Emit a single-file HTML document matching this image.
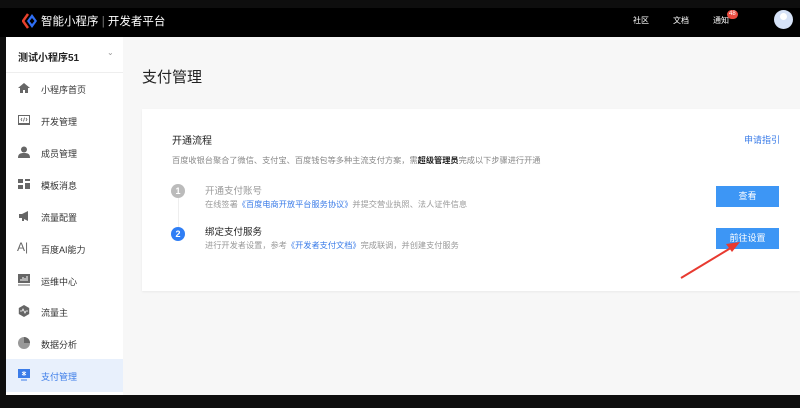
<!DOCTYPE html>
<html><head><meta charset="utf-8"><style>
*{margin:0;padding:0;box-sizing:border-box}
body{width:800px;height:408px;overflow:hidden;background:#0e0e0e;font-family:"Liberation Sans","Noto Sans CJK SC",sans-serif;position:relative}
.a{position:absolute;white-space:nowrap}
.nav{left:0;top:8px;width:800px;height:29px;background:#000}
.main{left:6px;top:37px;width:794px;height:358px;background:#f7f7f7}
.side{left:6px;top:37px;width:117px;height:358px;background:#fff}
.it{font-size:9px;color:#333;left:41px}
.ic{left:18px;width:12px;height:12px}
.card{left:142px;top:109px;width:658px;height:182px;background:#fff;box-shadow:0 1px 2px rgba(0,0,0,.06)}
.btn{left:716px;width:63px;height:21px;background:#3d96f5;color:#fff;font-size:9px;text-align:center;line-height:21px}
.cir{width:14px;height:14px;border-radius:50%;color:#fff;font-size:9px;font-weight:bold;text-align:center;line-height:14px}
</style></head><body>
<div class="a nav"></div>
<svg class="a" style="left:22px;top:13px" width="16" height="16" viewBox="0 0 16 16"><path d="M6 1L1 8l5 7" stroke="#e8412c" stroke-width="2.5" fill="none"/><path d="M10 1l5 7-5 7-5-7z" fill="#2f6ff5"/><path d="M10 5l2.5 3-2.5 3-2.5-3z" fill="#000"/></svg>
<div class="a" style="left:41px;top:13px;color:#fff;font-size:11.5px">智能小程序 <span style="color:#777">|</span> 开发者平台</div>
<div class="a" style="left:633px;top:15px;color:#fff;font-size:8px">社区</div>
<div class="a" style="left:673px;top:15px;color:#fff;font-size:8px">文档</div>
<div class="a" style="left:713px;top:15px;color:#fff;font-size:8px">通知</div>
<div class="a" style="left:727px;top:10px;background:#e84a3f;color:#fff;font-size:6px;border-radius:5px;padding:0 2px;line-height:9px">48</div>
<div class="a" style="left:774px;top:10px;width:19px;height:19px;border-radius:50%;background:#d6e2f7"></div>
<div class="a" style="left:780px;top:13px;width:7px;height:7px;border-radius:50%;background:#fff"></div>
<div class="a main"></div>
<div class="a side"></div>
<div class="a" style="left:18px;top:49px;font-size:10px;color:#222;font-weight:bold">测试小程序51</div>
<div class="a" style="left:107px;top:48px;font-size:8px;color:#999">⌄</div>
<div class="a" style="left:6px;top:72px;width:117px;height:1px;background:#eee"></div>
<div class="a" style="left:6px;top:359px;width:117px;height:33px;background:#e8f0fc"></div>
<div class="a it" style="top:83px">小程序首页</div>
<div class="a it" style="top:115px">开发管理</div>
<div class="a it" style="top:147px">成员管理</div>
<div class="a it" style="top:179px">模板消息</div>
<div class="a it" style="top:211px">流量配置</div>
<div class="a it" style="top:243px">百度AI能力</div>
<div class="a it" style="top:275px">运维中心</div>
<div class="a it" style="top:306px">流量主</div>
<div class="a it" style="top:338px">数据分析</div>
<div class="a it" style="top:370px;color:#3b7ce8">支付管理</div>
<svg class="a ic" style="top:82px" viewBox="0 0 12 12"><path d="M6 1L0 6h2v5h3V8h2v3h3V6h2z" fill="#666"/></svg>
<svg class="a ic" style="top:114px" viewBox="0 0 12 12"><rect x=".5" y="1.5" width="11" height="8" fill="none" stroke="#666"/><path d="M4 4L3 5.5 4 7M8 4l1 1.5L8 7M6.5 3.5l-1 4" stroke="#666" fill="none" stroke-width=".8"/><rect y="10" width="12" height="1" fill="#666"/></svg>
<svg class="a ic" style="top:146px" viewBox="0 0 12 12"><circle cx="6" cy="3.5" r="3" fill="#666"/><path d="M0 12c0-4 2-5 6-5s6 1 6 5z" fill="#666"/></svg>
<svg class="a ic" style="top:178px" viewBox="0 0 12 12"><rect x="0" y="1" width="5" height="4" fill="#666"/><rect x="7" y="1" width="5" height="2" fill="#666"/><rect x="0" y="7" width="5" height="4" fill="#666"/><rect x="7" y="5" width="5" height="6" fill="#666"/></svg>
<svg class="a ic" style="top:210px" viewBox="0 0 12 12"><path d="M1 4h3l6-3v10L4 8H1z" fill="#666"/><rect x="4" y="8" width="2" height="3" fill="#666"/></svg>
<div class="a" style="left:17px;top:240px;font-size:12px;color:#666">A|</div>
<svg class="a ic" style="top:274px" viewBox="0 0 12 12"><rect x="0" y="0" width="12" height="9" fill="#666"/><path d="M3 7V5M5 7V3M7 7V4M9 7V2" stroke="#fff"/><rect y="10.5" width="12" height="1" fill="#666"/></svg>
<svg class="a ic" style="top:305px" viewBox="0 0 12 12"><path d="M6 0l5.2 3v6L6 12 .8 9V3z" fill="#666"/><path d="M2 6h2l1-2 2 4 1-2h2" stroke="#fff" fill="none" stroke-width=".8"/></svg>
<svg class="a ic" style="top:337px" viewBox="0 0 12 12"><circle cx="6" cy="6" r="6" fill="#999"/><path d="M6 6V0a6 6 0 0 1 6 6z" fill="#666"/></svg>
<svg class="a ic" style="top:369px" viewBox="0 0 12 12"><rect x="0" y="0" width="12" height="9" fill="#3b7ce8"/><path d="M6 2v5M4 3l4 3M8 3L4 6" stroke="#fff" stroke-width=".8"/><rect x="3" y="10.5" width="6" height="1" fill="#3b7ce8"/></svg>
<div class="a" style="left:142px;top:66px;font-size:15px;color:#222">支付管理</div>
<div class="a card"></div>
<div class="a" style="left:172px;top:132px;font-size:10px;color:#222">开通流程</div>
<div class="a" style="left:744px;top:133px;font-size:9px;color:#3b7ce8">申请指引</div>
<div class="a" style="left:172px;top:154px;font-size:8.2px;color:#888">百度收银台聚合了微信、支付宝、百度钱包等多种主流支付方案，需<b style="color:#222">超级管理员</b>完成以下步骤进行开通</div>
<div class="a" style="left:178px;top:198px;width:1px;height:30px;background:#eee"></div>
<div class="a cir" style="left:171px;top:184px;background:#bbb">1</div>
<div class="a cir" style="left:171px;top:227px;background:#2f7ef5">2</div>
<div class="a" style="left:205px;top:183px;font-size:9.5px;color:#999">开通支付账号</div>
<div class="a" style="left:205px;top:198px;font-size:8.2px;color:#999">在线签署<span style="color:#3b7ce8">《百度电商开放平台服务协议》</span>并提交营业执照、法人证件信息</div>
<div class="a" style="left:205px;top:224px;font-size:9.5px;color:#222">绑定支付服务</div>
<div class="a" style="left:205px;top:239px;font-size:8.2px;color:#999">进行开发者设置，参考<span style="color:#3b7ce8">《开发者支付文档》</span>完成联调，并创建支付服务</div>
<div class="a btn" style="top:186px">查看</div>
<div class="a btn" style="top:228px">前往设置</div>
<svg class="a" style="left:676px;top:238px" width="70" height="45"><path d="M5 40L58 8" stroke="#e83a30" stroke-width="2"/><path d="M64 4L50 6l6 8z" fill="#e83a30"/></svg>
</body></html>
